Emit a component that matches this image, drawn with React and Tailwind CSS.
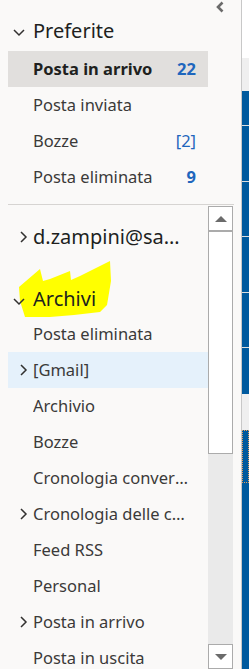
import React from 'react';

function Chevron({ dir = 'right', className = '' }) {
  // small thin chevron like the Outlook folder pane
  const d = dir === 'down' ? 'M1 4 L6 9 L11 4' : 'M4 1 L9 6 L4 11';
  return (
    <svg width="12" height="12" viewBox="0 0 12 12" className={className}>
      <path d={d} fill="none" stroke="#323130" strokeWidth="1.5" />
    </svg>
  );
}

function FolderRow({ name, count, countStyle = 'bold', bold, selected, hover, expand }) {
  let bg = '';
  if (selected) bg = 'bg-[#e1dfdd]';
  if (hover) bg = 'bg-[#e5f1fb]';
  return (
    <div className={`relative flex items-center h-9 w-[200px] pl-[25px] pr-3 ${bg}`}>
      {expand && (
        <div className="absolute left-[9px] top-[12px]">
          <Chevron />
        </div>
      )}
      <span className={`flex-1 truncate pr-[3px] text-[16.5px] ${bold ? 'font-bold text-[#201f1e]' : 'text-[#3b3a39]'}`}>{name}</span>
      {count && (
        <span className={`text-[16.5px] text-[#1e66bd] ${countStyle === 'bold' ? 'font-bold' : ''}`}>{count}</span>
      )}
    </div>
  );
}

function ScrollBar() {
  return (
    <div className="flex flex-col w-[25px] h-full bg-[#eaeaea]">
      <div className="h-[25px] border border-[#ababab] bg-white flex items-center justify-center shrink-0">
        <div className="w-0 h-0 border-l-[6px] border-r-[6px] border-b-[6px] border-l-transparent border-r-transparent border-b-[#6b6b6b]" />
      </div>
      <div className="h-[223px] border border-[#ababab] bg-white shrink-0" />
      <div className="flex-1" />
      <div className="h-[25px] border border-[#ababab] bg-white flex items-center justify-center shrink-0">
        <div className="w-0 h-0 border-l-[6px] border-r-[6px] border-t-[6px] border-l-transparent border-r-transparent border-t-[#6b6b6b]" />
      </div>
    </div>
  );
}

export default function App() {
  const archivi = [
    { name: 'Posta eliminata' },
    { name: '[Gmail]', expand: true, hover: true },
    { name: 'Archivio' },
    { name: 'Bozze' },
    { name: 'Cronologia conversazioni' },
    { name: 'Cronologia delle chat', expand: true },
    { name: 'Feed RSS' },
    { name: 'Personal' },
    { name: 'Posta in arrivo', expand: true },
    { name: 'Posta in uscita' },
    { name: 'Spam' },
  ];

  return (
    <div className="flex w-[249px] h-[669px] overflow-hidden bg-[#faf9f8]" style={{ fontFamily: '"Noto Sans", "Open Sans", sans-serif' }}>
      <div className="w-[241px] flex flex-col pl-2">
        <div className="h-[13px] flex justify-end pr-[16px] pt-[1px]">
          <svg width="10" height="12" viewBox="0 0 10 12">
            <path d="M7.5 1.5 L3 6 L7.5 10.5" fill="none" stroke="#6b6b6b" strokeWidth="2.6" />
          </svg>
        </div>
        <div className="relative h-[38px] flex items-center pl-[25px] pb-[3px]">
          <div className="absolute left-[5px] top-[13px]">
            <Chevron dir="down" />
          </div>
          <span className="text-[20px] text-[#201f1e]">Preferite</span>
        </div>
        <FolderRow name="Posta in arrivo" count="22" bold selected />
        <FolderRow name="Posta inviata" />
        <FolderRow name="Bozze" count="[2]" countStyle="normal" />
        <FolderRow name="Posta eliminata" count="9" />
        <div className="h-[9px]" />
        <div className="h-px w-[226px] bg-[#d6d4d2]" />
        <div className="flex flex-1 min-h-0">
          <div className="w-[200px] overflow-hidden">
            <div className="relative h-[64px] flex items-center pl-[25px]">
              <div className="absolute left-[9px] top-[26px]">
                <Chevron />
              </div>
              <span className="text-[20px] text-[#201f1e] truncate pr-[18px]">d.zampini@sanmarco.it</span>
            </div>
            <div className="relative h-[47px] flex items-end pb-[2px] pl-[25px]">
              <svg className="absolute left-[11px] top-[-8px]" width="93" height="58" viewBox="0 0 93 58">
                <path d="M0 26 L21 8 L24 20 L31 18 L51 10 L52 19 L61 15 L91 0 L92 20 L88 44 L81 51 L55 54 L31 56 L6 56 L1 40 Z" fill="#ffff00" />
              </svg>
              <div className="absolute left-[5px] top-[26px]">
                <Chevron dir="down" />
              </div>
              <span className="relative text-[20px] text-[#201f1e]">Archivi</span>
            </div>
            {archivi.map((f) => (
              <FolderRow key={f.name} name={f.name} expand={f.expand} hover={f.hover} />
            ))}
          </div>
          <div className="pt-px h-full">
            <ScrollBar />
          </div>
        </div>
      </div>
      <div className="w-px bg-[#c8c8c8]" />
      <div className="flex-1 flex flex-col">
        <div className="h-[58px] bg-white" />
        <div className="h-[33px] bg-[#efefef]" />
        <div className="h-[35px] bg-[#005a9e] border-b border-[#e0e0e0]" />
        <div className="h-[56px] bg-[#005a9e] border-b border-[#e0e0e0]" />
        <div className="h-[55px] bg-[#005a9e] border-b border-[#e0e0e0]" />
        <div className="h-[56px] bg-[#005a9e] border-b border-[#e0e0e0]" />
        <div className="h-[55px] bg-[#005a9e] border-b border-[#e0e0e0]" />
        <div className="h-[46px] bg-[#005a9e]" />
        <div className="h-[36px] bg-[#efefef]" />
        <div className="h-[53px] bg-[#005a9e] border border-dotted border-[#e8a060]" />
        <div className="flex-1 bg-[#005a9e]" />
      </div>
    </div>
  );
}
